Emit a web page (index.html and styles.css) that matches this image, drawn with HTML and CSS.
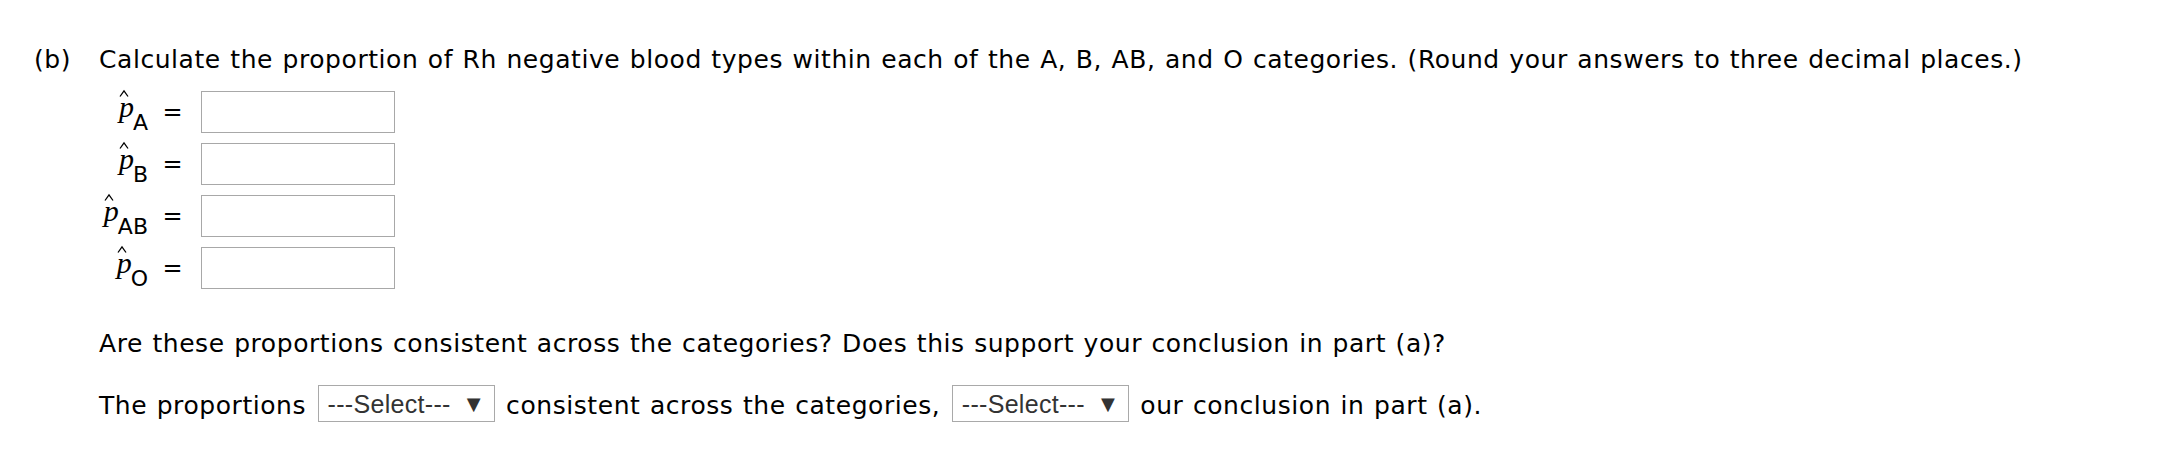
FILE: index.html
```html
<!DOCTYPE html>
<html>
<head>
<meta charset="utf-8">
<link rel="stylesheet" href="styles.css">
</head>
<body>
<div class="question">
  <div class="part-label">(b)</div>
  <div class="part-body">
    <p class="prompt">Calculate the proportion of Rh negative blood types within each of the A, B, AB, and O categories. (Round your answers to three decimal places.)</p>
    <div class="answers">
      <div class="label"><span class="phat">p<svg class="hat" width="10" height="7" viewBox="0 0 10 7"><polyline points="1,6.5 5,0.8 9,6.5" /></svg></span><sub class="sub">A</sub></div>
      <div class="eq">=</div>
      <span class="box"></span>

      <div class="label"><span class="phat">p<svg class="hat" width="10" height="7" viewBox="0 0 10 7"><polyline points="1,6.5 5,0.8 9,6.5" /></svg></span><sub class="sub">B</sub></div>
      <div class="eq">=</div>
      <span class="box"></span>

      <div class="label"><span class="phat">p<svg class="hat" width="10" height="7" viewBox="0 0 10 7"><polyline points="1,6.5 5,0.8 9,6.5" /></svg></span><sub class="sub">AB</sub></div>
      <div class="eq">=</div>
      <span class="box"></span>

      <div class="label"><span class="phat">p<svg class="hat" width="10" height="7" viewBox="0 0 10 7"><polyline points="1,6.5 5,0.8 9,6.5" /></svg></span><sub class="sub">O</sub></div>
      <div class="eq">=</div>
      <span class="box"></span>
    </div>
    <p class="followup">Are these proportions consistent across the categories? Does this support your conclusion in part (a)?</p>
    <p class="fill">The proportions <span class="select"><span class="select-text">---Select---</span><span class="arrow">▼</span></span> consistent across the categories, <span class="select"><span class="select-text">---Select---</span><span class="arrow">▼</span></span> our conclusion in part (a).</p>
  </div>
</div>
</body>
</html>
```

FILE: styles.css
```css
html, body {
  margin: 0;
  background: #ffffff;
}

body {
  font-family: "DejaVu Sans", Verdana, sans-serif;
  font-size: 25px;
  line-height: 28px;
  letter-spacing: 0.56px;
  word-spacing: 1px;
  color: #000000;
}

.question {
  display: flex;
  padding: 46px 0 0 34px;
}

.part-label {
  width: 65px;
  flex: none;
}

.part-body {
  flex: 1;
}

.prompt {
  margin: 0;
  white-space: nowrap;
}

.answers {
  display: grid;
  grid-template-columns: 49px 53px 194px;
  grid-auto-rows: 42px;
  row-gap: 10px;
  align-items: center;
  margin-top: 17px;
  letter-spacing: 0;
}

.label {
  text-align: right;
  white-space: nowrap;
  line-height: 30px;
}

.phat {
  position: relative;
  top: -4px;
  display: inline-block;
  font-family: "Liberation Serif", "Times New Roman", serif;
  font-style: italic;
  font-size: 30px;
  line-height: 30px;
  margin-right: -1px;
}

.hat {
  position: absolute;
  left: 0;
  top: -2px;
  overflow: visible;
}

.hat polyline {
  fill: none;
  stroke: #000000;
  stroke-width: 1.3;
  stroke-linejoin: miter;
}

.sub {
  font-size: 22px;
  line-height: 0;
  vertical-align: -9px;
}

.eq {
  text-align: center;
  padding-right: 4px;
  font-size: 24px;
}

.box {
  display: block;
  height: 42px;
  box-sizing: border-box;
  border: 1px solid #a8a8a8;
  background: #ffffff;
}

.followup {
  margin: 41px 0 0 0;
}

.fill {
  margin: 27px 0 0 0;
  white-space: nowrap;
}

.select {
  display: inline-flex;
  align-items: center;
  justify-content: space-between;
  box-sizing: border-box;
  width: 177px;
  height: 37px;
  margin: 0 2px;
  padding: 0 13px 0 9px;
  border: 1px solid #a9a9a9;
  font-family: "Liberation Sans", Arial, sans-serif;
  font-size: 25px;
  letter-spacing: 0.3px;
  word-spacing: 0;
  color: #333333;
  vertical-align: 1px;
}

.arrow {
  font-family: "DejaVu Sans", sans-serif;
  font-size: 18px;
  letter-spacing: 0;
  color: #333333;
}
```
